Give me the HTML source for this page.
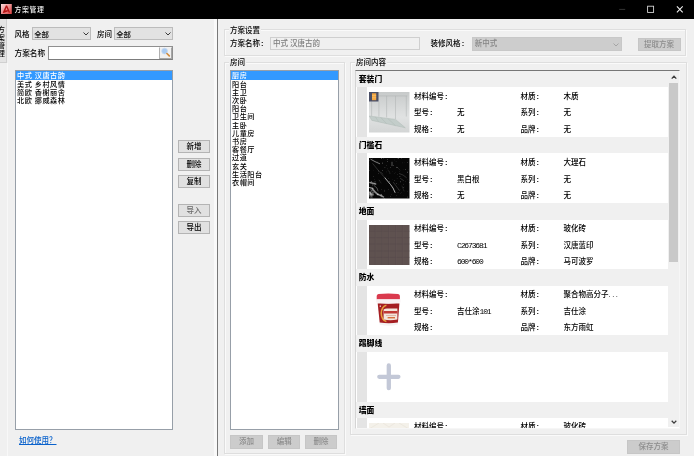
<!DOCTYPE html>
<html lang="zh-CN">
<head>
<meta charset="utf-8">
<title>方案管理</title>
<style>
html,body{margin:0;padding:0;}
body{width:694px;height:456px;overflow:hidden;background:#f0f0f0;position:relative;
 font-family:"Liberation Sans","Noto Sans CJK SC",sans-serif;font-size:7.5px;color:#000;line-height:1;font-weight:500;}
#root{position:absolute;left:0;top:0;width:694px;height:456px;overflow:hidden;will-change:transform;}
.a{position:absolute;white-space:nowrap;}
.t{position:absolute;white-space:nowrap;line-height:10px;height:10px;}
#titlebar{left:0;top:0;width:694px;height:19px;background:#000;}
.btn{position:absolute;box-sizing:border-box;border:1px solid #b4b4b4;background:#e1e1e1;text-align:center;line-height:12.8px;font-size:7.5px;}
.btn.dis{color:#8c8c8c;border-color:#c6c6c6;background:#cccccc;}
.combo{position:absolute;box-sizing:border-box;border:1px solid #bcbcbc;background:#e2e2e2;line-height:10px;padding-left:2px;}
.list{position:absolute;box-sizing:border-box;border:1px solid #979fa8;background:#fff;}
.grp{position:absolute;box-sizing:border-box;border:1px solid #dedede;box-shadow:inset 1px 1px 0 #fafafa,1px 1px 0 #fafafa;}
.gl{position:absolute;background:#f0f0f0;padding:0 1px;line-height:10px;}
.li{position:absolute;left:1px;white-space:nowrap;line-height:8.3px;height:8.3px;font-size:7.15px;letter-spacing:0.5px;}
.hd{position:absolute;left:0;width:312px;height:16.4px;background:#f0f0f0;font-weight:900;line-height:18.6px;padding-left:2.8px;box-sizing:border-box;font-size:7.8px;}
.row{position:absolute;left:0;width:312px;height:50px;background:#fff;}
.row .strip{position:absolute;left:1px;top:0;width:9.5px;height:50px;background:#e4e4e4;}
.row span{position:absolute;white-space:nowrap;line-height:10px;font-size:7.5px;margin-top:0.6px;}
.row i{font-style:normal;font-family:"Liberation Mono",monospace;font-size:8px;letter-spacing:-1.14px;font-weight:400;}
.c{display:inline-block;width:4.6px;text-align:center;font-style:normal;font-weight:700;}
.row b{font-weight:inherit;letter-spacing:1.6px;}
.row .im{position:absolute;left:13.3px;top:5px;}
</style>
</head>
<body>
<div id="root">
<!-- title bar -->
<div class="a" id="titlebar"></div>
<svg class="a" style="left:1.1px;top:4px" width="10.8" height="10" viewBox="0 0 10.8 10"><defs><linearGradient id="ig" x1="0" y1="0" x2="1" y2="1"><stop offset="0" stop-color="#f9dcdc"/><stop offset="0.5" stop-color="#ee8f8f"/><stop offset="1" stop-color="#d43c3c"/></linearGradient></defs><rect width="10.8" height="10" fill="url(#ig)"/><path d="M1.8 8.6L4.9 1.6L6.1 1.6L9.1 8.6L7.7 8.6L5.5 3.6L4.3 6.5L6.6 6L7.1 7.2L2.6 8.9Z" fill="#b31212"/></svg>
<div class="t" style="left:14.6px;top:4.7px;color:#f4f4f4;font-size:6.9px;letter-spacing:0.6px">方案管理</div>
<svg class="a" style="left:600px;top:0" width="94" height="19" viewBox="0 0 94 19"><path d="M19.2 9.4h6" stroke="#3a3a3a" stroke-width="0.9" fill="none"/><rect x="47.6" y="6.2" width="6" height="6.2" stroke="#dcdcdc" stroke-width="0.85" fill="none"/><path d="M76.9 6.4l5.8 6M82.7 6.4l-5.8 6" stroke="#f2f2f2" stroke-width="1.05" fill="none"/></svg>

<!-- left vertical tab -->
<div class="a" style="left:0;top:19px;width:7px;height:44px;background:#e4e4e4;border-right:1px solid #d0d0d0;border-bottom:1px solid #d0d0d0;box-sizing:border-box"></div>
<div class="a" style="left:7px;top:63px;width:1px;height:393px;background:#f8f8f8"></div>
<div class="a" style="left:-2.6px;top:25.6px;width:8px;font-size:7.4px;line-height:8.2px;white-space:normal;word-break:break-all">方案管理</div>

<!-- left filters -->
<div class="t" style="left:14.5px;top:29.5px">风格</div>
<div class="combo" style="left:32px;top:27px;width:59.3px;height:13.3px;line-height:13px;padding-left:1.2px;font-size:7.4px">全部</div>
<svg class="a" style="left:82.5px;top:32px" width="6" height="4" viewBox="0 0 6 4"><path d="M0.5 0.5L3 3L5.5 0.5" stroke="#3a3a3a" stroke-width="1" fill="none"/></svg>
<div class="t" style="left:97px;top:29.5px">房间</div>
<div class="combo" style="left:114px;top:27px;width:59.4px;height:13.3px;line-height:13px;padding-left:1.2px;font-size:7.4px">全部</div>
<svg class="a" style="left:164.6px;top:32px" width="6" height="4" viewBox="0 0 6 4"><path d="M0.5 0.5L3 3L5.5 0.5" stroke="#3a3a3a" stroke-width="1" fill="none"/></svg>
<div class="t" style="left:14.5px;top:48.5px;font-size:7.65px">方案名称</div>
<div class="a" style="left:48px;top:45.5px;width:125.3px;height:14px;box-sizing:border-box;border:1px solid #8f8f8f;border-bottom-color:#7c7c7c;background:#fff"></div>
<div class="a" style="left:159.4px;top:46.5px;width:12.9px;height:12px;box-sizing:border-box;border:1px solid #f4f4f4;border-left-color:#b0b0b0;border-right-color:#a6a6a6;border-bottom-color:#a6a6a6;background:#f0f0f0"></div>
<svg class="a" style="left:160px;top:46px" width="12" height="13" viewBox="0 0 12 13"><circle cx="4.6" cy="5.1" r="2.9" fill="#a9caf0" stroke="#c3d9f3" stroke-width="0.7"/><path d="M6.9 7.5L9.3 9.9" stroke="#cf8a3c" stroke-width="1.6" stroke-linecap="round"/></svg>

<!-- scheme list -->
<div class="list" style="left:15px;top:70px;width:158px;height:360px">
 <div class="a" style="left:0;top:0.2px;width:156px;height:8.6px;background:#3399ff"></div>
 <div class="li" style="top:1.4px;color:#fff">中式 汉唐古韵</div>
 <div class="li" style="top:9.75px">美式 乡村风情</div>
 <div class="li" style="top:18.1px">简欧 香榭丽舍</div>
 <div class="li" style="top:26.45px">北欧 挪威森林</div>
</div>
<div class="t" style="left:19px;top:435.5px;color:#0a62cc;text-decoration:underline;font-size:7.5px">如何使用？</div>

<!-- middle buttons -->
<div class="btn" style="left:178px;top:140px;width:32px;height:13.2px">新增</div>
<div class="btn" style="left:178px;top:158px;width:32px;height:13px">删除</div>
<div class="btn" style="left:178px;top:175.3px;width:32px;height:13.1px">复制</div>
<div class="btn" style="left:178px;top:204.2px;width:32px;height:12.8px;color:#6a6a6a">导入</div>
<div class="btn" style="left:178px;top:221.2px;width:32px;height:12.8px">导出</div>

<!-- separator -->
<div class="a" style="left:213.5px;top:19px;width:3.3px;height:437px;background:#f9f9f9"></div>
<div class="a" style="left:216.8px;top:19px;width:1px;height:437px;background:#787878"></div>


<!-- scheme settings group -->
<div class="grp" style="left:224px;top:29.4px;width:462px;height:26.4px"></div>
<div class="gl" style="left:229px;top:25.5px">方案设置</div>
<div class="t" style="left:230px;top:39px">方案名称<em class="c">:</em></div>
<div class="a" style="left:270px;top:37.2px;width:150.3px;height:12.4px;box-sizing:border-box;border:1px solid #cfcfcf;background:#f0f0f0;line-height:12.6px;padding-left:2px;color:#7d7d7d">中式 汉唐古韵</div>
<div class="t" style="left:430.6px;top:38.8px">装修风格<em class="c">:</em></div>
<div class="combo" style="left:471.8px;top:37.4px;width:150px;height:13.2px;background:#cdcdcd;border-color:#c8c8c8;color:#858585;line-height:12.8px">新中式</div>
<svg class="a" style="left:612.5px;top:42.5px" width="6" height="4" viewBox="0 0 6 4"><path d="M0.5 0.5L3 3L5.5 0.5" stroke="#9a9a9a" stroke-width="0.8" fill="none"/></svg>
<div class="btn dis" style="left:637.5px;top:38.1px;width:43px;height:12.5px;line-height:11.8px">提取方案</div>

<!-- room group -->
<div class="grp" style="left:224px;top:62px;width:120.5px;height:391.5px"></div>
<div class="gl" style="left:229px;top:58.3px">房间</div>
<div class="list" style="left:230px;top:70px;width:109px;height:360px">
 <div class="a" style="left:0;top:0.2px;width:107px;height:8.6px;background:#3399ff"></div>
 <div class="li" style="top:1.3px;color:#fff">厨房</div>
 <div class="li" style="top:9.5px">阳台</div>
 <div class="li" style="top:17.7px">主卫</div>
 <div class="li" style="top:25.9px">次卧</div>
 <div class="li" style="top:34.1px">阳台</div>
 <div class="li" style="top:42.3px">卫生间</div>
 <div class="li" style="top:50.5px">主卧</div>
 <div class="li" style="top:58.7px">儿童房</div>
 <div class="li" style="top:66.9px">书房</div>
 <div class="li" style="top:75.1px">客餐厅</div>
 <div class="li" style="top:83.3px">过道</div>
 <div class="li" style="top:91.5px">玄关</div>
 <div class="li" style="top:99.7px">生活阳台</div>
 <div class="li" style="top:107.9px">衣帽间</div>
</div>
<div class="btn dis" style="left:230.3px;top:435px;width:32.6px;height:13.7px;line-height:12.5px">添加</div>
<div class="btn dis" style="left:267.9px;top:435px;width:32.6px;height:13.7px;line-height:12.5px">编辑</div>
<div class="btn dis" style="left:304.8px;top:435px;width:32.4px;height:13.7px;line-height:12.5px">删除</div>

<!-- room content group -->
<div class="grp" style="left:350px;top:62px;width:337px;height:373px"></div>
<div class="gl" style="left:355px;top:58.3px">房间内容</div>
<div class="list" id="content" style="left:355px;top:70px;width:325.4px;height:358.6px;overflow:hidden;border-color:#767676 #f6f6f6 #f6f6f6 #d4d4d4">
<div class="hd" style="top:0.0px">套装门</div>
<div class="row" style="top:16.3px"><div class="strip"></div><svg class="im" width="40.5" height="40.5" viewBox="0 0 40.5 40.5"><defs><linearGradient id="dg" x1="0" y1="0" x2="0" y2="1"><stop offset="0" stop-color="#c7caca"/><stop offset="0.5" stop-color="#dcdede"/><stop offset="0.62" stop-color="#e0e2e2"/><stop offset="1" stop-color="#d3d5d5"/></linearGradient></defs><rect width="40.5" height="40.5" fill="url(#dg)"/><path d="M9.5 3.9H38.3M2.6 9.5V24.3M9.9 9.5V24.6M17.6 3.9V25.4M26.5 3.9V27M37.3 3.9V24.5" stroke="#adb1b1" stroke-width="0.5" fill="none"/><path d="M0.3 24L26.5 27.4L36.3 35.8L2.8 28.4Z" fill="#c3cdca"/><path d="M0.3 24L2.8 28.4L36.3 35.8M6.2 24.7L9.7 29.8M11.6 25.4L17.6 31.6M18.6 26.4L26.5 33.6M0.3 24L26.5 27.4L36.3 35.8" stroke="#acb8b4" stroke-width="0.45" fill="none"/><rect x="0" y="0" width="9.5" height="9.5" fill="#4a4f66"/><rect x="3" y="1.3" width="4.2" height="6.9" fill="#f2a640"/><path d="M3 3.6H7.2M3 5.8H7.2" stroke="#f9cf8e" stroke-width="0.5"/></svg><span style="left:58px;top:4px">材料编号<em class="c">:</em></span><span style="left:164.5px;top:4px">材质<em class="c">:</em></span><span style="left:207.5px;top:4px">木质</span><span style="left:58px;top:20.6px">型号<em class="c">:</em></span><span style="left:101px;top:20.6px">无</span><span style="left:164.5px;top:20.6px">系列<em class="c">:</em></span><span style="left:207.5px;top:20.6px">无</span><span style="left:58px;top:37px">规格<em class="c">:</em></span><span style="left:101px;top:37px">无</span><span style="left:164.5px;top:37px">品牌<em class="c">:</em></span><span style="left:207.5px;top:37px">无</span></div>
<div class="hd" style="top:66.1px">门槛石</div>
<div class="row" style="top:82.4px"><div class="strip"></div><svg class="im" width="40.5" height="40.5" viewBox="0 0 40.5 40.5"><defs><filter id="mn" x="0" y="0" width="100%" height="100%"><feTurbulence type="fractalNoise" baseFrequency="0.55" numOctaves="2" seed="7"/><feColorMatrix type="matrix" values="0 0 0 0 1  0 0 0 0 1  0 0 0 0 1  3.4 0 0 0 -2.25"/></filter><filter id="mn2" x="0" y="0" width="100%" height="100%"><feTurbulence type="fractalNoise" baseFrequency="0.18" numOctaves="3" seed="3"/><feColorMatrix type="matrix" values="0 0 0 0 1  0 0 0 0 1  0 0 0 0 1  4 0 0 0 -2.3"/></filter><clipPath id="mc"><path d="M0 21L16 40.5H0Z"/></clipPath></defs><rect width="40.5" height="40.5" fill="#060606"/><rect width="40.5" height="40.5" filter="url(#mn)" opacity="0.55"/><rect width="40.5" height="40.5" filter="url(#mn2)" opacity="0.55" clip-path="url(#mc)"/><g stroke="#e6e6e6" fill="none" stroke-linecap="round"><path d="M1.8 1.3L6 3.6L10.7 5.7" stroke-width="0.7" opacity="0.75"/><path d="M3.8 5.7L9 12L15.6 19.5" stroke-width="0.6" opacity="0.3"/><path d="M16 20L21.5 26.5L24 30L26 34.4" stroke-width="0.9" opacity="0.85"/><path d="M23 4.2V7.7" stroke-width="0.8" opacity="0.45"/><path d="M24.5 24.5L30.4 32.4" stroke-width="0.5" opacity="0.35"/><path d="M30.4 15.6L34 17L37.3 19.5M31.5 20.5L34.5 22.5" stroke-width="0.6" opacity="0.3"/><path d="M0.8 24.5L6.7 26" stroke-width="1.3" opacity="0.6"/><path d="M0 29.5L3.8 30.4" stroke-width="1.2" opacity="0.75"/><path d="M3.8 31.4L6 34L8.7 36.3" stroke-width="1.7" opacity="0.6"/><path d="M8.7 36.3L12 38L14.6 38.8" stroke-width="1.3" opacity="0.55"/><path d="M1 34L3 38" stroke-width="1.1" opacity="0.45"/><path d="M5 27.5L8 30L9 33" stroke-width="0.8" opacity="0.4"/><path d="M12 14L14 16M28 9L31 12M19 12L21 15M33 28L35 33M10 22L12 25" stroke-width="0.5" opacity="0.22"/></g></svg><span style="left:58px;top:4px">材料编号<em class="c">:</em></span><span style="left:164.5px;top:4px">材质<em class="c">:</em></span><span style="left:207.5px;top:4px">大理石</span><span style="left:58px;top:20.6px">型号<em class="c">:</em></span><span style="left:101px;top:20.6px">黑白根</span><span style="left:164.5px;top:20.6px">系列<em class="c">:</em></span><span style="left:207.5px;top:20.6px">无</span><span style="left:58px;top:37px">规格<em class="c">:</em></span><span style="left:101px;top:37px">无</span><span style="left:164.5px;top:37px">品牌<em class="c">:</em></span><span style="left:207.5px;top:37px">无</span></div>
<div class="hd" style="top:132.2px">地面</div>
<div class="row" style="top:148.5px"><div class="strip"></div><svg class="im" width="40.5" height="40.5" viewBox="0 0 40.5 40.5"><rect width="40.5" height="40.5" fill="#5f5250"/><path d="M6.2 0V40.5M13.1 0V40.5M19.5 0V40.5M26.5 0V40.5M33.4 0V40.5M0 6.2H40.5M0 12.6H40.5M0 19H40.5M0 26H40.5M0 32.4H40.5" stroke="#54474a" stroke-width="0.7" opacity="0.7"/><path d="M6.9 0V40.5M13.8 0V40.5M20.2 0V40.5M27.2 0V40.5M34.1 0V40.5" stroke="#6a5d5b" stroke-width="0.5" opacity="0.6"/></svg><span style="left:58px;top:4px">材料编号<em class="c">:</em></span><span style="left:164.5px;top:4px">材质<em class="c">:</em></span><span style="left:207.5px;top:4px">玻化砖</span><span style="left:58px;top:20.6px">型号<em class="c">:</em></span><span style="left:101px;top:20.6px"><i>C2673681</i></span><span style="left:164.5px;top:20.6px">系列<em class="c">:</em></span><span style="left:207.5px;top:20.6px">汉唐蓝印</span><span style="left:58px;top:37px">规格<em class="c">:</em></span><span style="left:101px;top:37px"><i>600*600</i></span><span style="left:164.5px;top:37px">品牌<em class="c">:</em></span><span style="left:207.5px;top:37px">马可波罗</span></div>
<div class="hd" style="top:198.3px">防水</div>
<div class="row" style="top:214.6px"><div class="strip"></div><svg class="im" width="40.5" height="40.5" viewBox="0 0 40.5 40.5"><path d="M8.7 12L30.4 12L28.9 33.6Q19.8 36 10.7 33.6Z" fill="#f4f2f2"/><path d="M8.7 12.6L30.4 12.6L28.9 31.6Q19.8 33 10.7 31.6Z" fill="#a51e22"/><path d="M7.7 5Q7.7 3.4 9.5 3.1Q19.3 1.9 29.1 3.1Q30.9 3.4 30.9 5L30.9 8.4L7.7 8.4Z" fill="#da3a4e"/><path d="M7.2 8.2H31.4V11.6Q19.3 13.8 7.2 11.6Z" fill="#f8f1f2"/><path d="M17.4 14.2A5.8 8.2 0 0 0 17.4 30.5" stroke="#e6a03c" stroke-width="1.6" fill="none"/><path d="M14.6 18.5Q16 17.6 18 17.6H28.4V28.4Q21 30 14.6 28.4Z" fill="#f3e6dc"/><rect x="14.8" y="20" width="13.6" height="2.5" fill="#c23a36"/><rect x="18.6" y="26" width="7.4" height="1.4" fill="#d8703f"/><rect x="17" y="24.2" width="10" height="0.5" fill="#c98a78"/><rect x="10.7" y="14.5" width="1.2" height="1.4" fill="#f0d8d8"/></svg><span style="left:58px;top:4px">材料编号<em class="c">:</em></span><span style="left:164.5px;top:4px">材质<em class="c">:</em></span><span style="left:207.5px;top:4px">聚合物高分子<b>...</b></span><span style="left:58px;top:20.6px">型号<em class="c">:</em></span><span style="left:101px;top:20.6px">吉仕涂<i>101</i></span><span style="left:164.5px;top:20.6px">系列<em class="c">:</em></span><span style="left:207.5px;top:20.6px">吉仕涂</span><span style="left:58px;top:37px">规格<em class="c">:</em></span><span style="left:164.5px;top:37px">品牌<em class="c">:</em></span><span style="left:207.5px;top:37px">东方雨虹</span></div>
<div class="hd" style="top:264.4px">踢脚线</div>
<div class="row" style="top:280.7px"><div class="strip"></div><svg class="im" width="40" height="41" viewBox="0 0 40 41"><path d="M10.3 19.8H29.4M19.8 8.4V31.2" stroke="#c3c8d7" stroke-width="4.3" stroke-linecap="round" fill="none"/></svg></div>
<div class="hd" style="top:330.5px">墙面</div>
<div class="row" style="top:346.8px"><div class="strip"></div><svg class="im" width="40" height="41" viewBox="0 0 40 41"><rect width="40" height="41" fill="#f4f1ea"/><path d="M0 6L10 0M14 0L20 4L26 0M40 6L30 0" stroke="#ebe6dc" stroke-width="0.8" fill="none"/></svg><span style="left:58px;top:4px">材料编号<em class="c">:</em></span><span style="left:164.5px;top:4px">材质<em class="c">:</em></span><span style="left:207.5px;top:4px">玻化砖</span><span style="left:58px;top:20.6px">型号<em class="c">:</em></span><span style="left:164.5px;top:20.6px">系列<em class="c">:</em></span><span style="left:58px;top:37px">规格<em class="c">:</em></span><span style="left:164.5px;top:37px">品牌<em class="c">:</em></span></div>
<!--sb--><div class="a" style="left:312px;top:0;width:12px;height:356px;background:#f0f0f0"></div><div class="a" style="left:313.2px;top:11.5px;width:9.3px;height:179px;background:#c9c9c9"></div><svg class="a" style="left:314.6px;top:3.6px" width="6" height="4.4" viewBox="0 0 6 4.4"><path d="M0.7 3.6L3 1.2L5.3 3.6" stroke="#3c3c3c" stroke-width="1.25" fill="none"/></svg><svg class="a" style="left:314.6px;top:349.2px" width="6" height="4.4" viewBox="0 0 6 4.4"><path d="M0.7 0.8L3 3.2L5.3 0.8" stroke="#3c3c3c" stroke-width="1.25" fill="none"/></svg>
</div>

<div class="btn dis" style="left:627px;top:440px;width:53px;height:13.6px;line-height:12.8px">保存方案</div>
</div>
</body>
</html>
